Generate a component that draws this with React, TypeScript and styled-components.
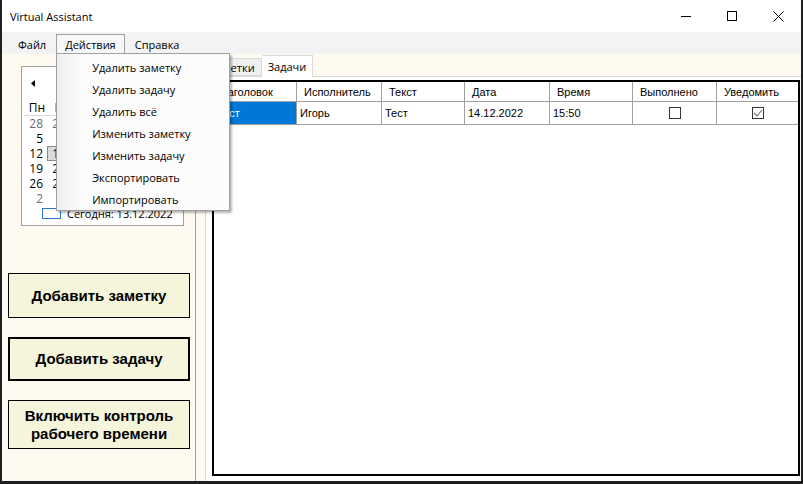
import React from 'react';
import styled, { createGlobalStyle } from 'styled-components';

const ui = `'Open Sans', 'Noto Sans', sans-serif`;
const classic = `'Liberation Sans', Arial, sans-serif`;

const GlobalStyle = createGlobalStyle`
    html, body {
        margin: 0;
        padding: 0;
        background: #1f1f1f;
    }
    * {
        box-sizing: border-box;
    }
`;

const Window = styled.div`
    width: 803px;
    height: 484px;
    display: flex;
    flex-direction: column;
    border-left: 2px solid #1f1f1f;
    border-right: 2px solid #1f1f1f;
    border-bottom: 3px solid #1f1f1f;
    background: #fffaf0;
    overflow: hidden;
`;

const TitleBar = styled.div`
    height: 32px;
    flex: none;
    display: flex;
    align-items: center;
    background: #fff;
`;

const Caption = styled.span`
    flex: 1;
    padding-left: 8px;
    font: 11px ${ui};
    color: #000;
`;

const CaptionButton = styled.div`
    width: 46px;
    height: 32px;
    display: flex;
    align-items: center;
    justify-content: center;
`;

const MenuBar = styled.div`
    height: 22px;
    flex: none;
    display: flex;
    align-items: flex-start;
    gap: 1px;
    padding: 2px 0 0 7px;
    background: #f3f3f3;
    position: relative;
    z-index: 5;
`;

const MenuItem = styled.div<{ $open?: boolean }>`
    position: relative;
    height: 19px;
    padding: 0 8px;
    display: flex;
    align-items: center;
    font: 11px ${ui};
    color: #000;
    border: 1px solid ${(p) => (p.$open ? '#a0a0a0' : 'transparent')};
    border-bottom: none;
    background: ${(p) => (p.$open ? '#f7f7f7' : 'transparent')};
`;

const Dropdown = styled.div`
    position: absolute;
    top: 100%;
    left: -1px;
    width: 174px;
    padding: 2px 0 0;
    border: 1px solid #a0a0a0;
    background: linear-gradient(to right, #efefef 0, #fafafa 23px, #fcfcfc 24px);
    box-shadow: 2px 2px 2px rgba(0, 0, 0, 0.28);
`;

const DropItem = styled.div`
    height: 22px;
    display: flex;
    align-items: center;
    padding-left: 35px;
    font: 11px ${ui};
    color: #000;
    white-space: nowrap;
`;

const Body = styled.div`
    flex: 1;
    display: flex;
    min-height: 0;
`;

const LeftPanel = styled.div`
    width: 194px;
    flex: none;
    display: flex;
    flex-direction: column;
    padding: 12px 0 0 6px;
    border-right: 1px solid #a0a0a0;
    background: #fffaf0;
`;

const Calendar = styled.div`
    width: 163px;
    height: 160px;
    margin-left: 13px;
    padding: 0 0 0 2px;
    border: 1px solid #a0a0a0;
    background: #fff;
    display: flex;
    flex-direction: column;
    font: 12px ${ui};
    color: #000;
`;

const CalHeader = styled.div`
    height: 32px;
    display: flex;
    align-items: center;
    justify-content: space-between;
    padding: 0 8px 0 7px;
`;

const MonthTitle = styled.span`
    font-size: 11px;
`;

const DayGrid = styled.div`
    display: grid;
    grid-template-columns: repeat(7, 23px);
`;

const WeekRow = styled(DayGrid)`
    height: 17px;
    border-bottom: 1px solid #d6d6d6;
    align-items: center;
`;

const WeekDay = styled.span`
    padding-right: 2px;
    text-align: right;
`;

const DayCell = styled.span<{ $other?: boolean; $selected?: boolean }>`
    height: 15px;
    display: flex;
    align-items: center;
    justify-content: flex-end;
    padding-right: 3px;
    line-height: 1;
    color: ${(p) => (p.$other ? '#6d6d6d' : '#000')};
    background: ${(p) => (p.$selected ? '#dadada' : 'transparent')};
    border: 1px solid ${(p) => (p.$selected ? '#8a8a8a' : 'transparent')};
`;

const TodayRow = styled.div`
    height: 15px;
    display: flex;
    align-items: center;
    gap: 6px;
    padding-left: 18px;
    font-size: 11px;
    white-space: nowrap;
`;

const TodayMark = styled.span`
    width: 19px;
    height: 11px;
    flex: none;
    border: 1px solid #2a7ad5;
`;

const ButtonStack = styled.div`
    display: flex;
    flex-direction: column;
    gap: 19px;
    margin-top: 47px;
`;

const ActionButton = styled.button<{ $focused?: boolean; $h: number }>`
    width: 182px;
    height: ${(p) => p.$h}px;
    padding: 0;
    background: #f5f5dc;
    border: ${(p) => (p.$focused ? 2 : 1)}px solid #000;
    font: bold 15px ${classic};
    line-height: 18px;
    color: #000;
    text-align: center;
`;

const RightPanel = styled.div`
    flex: 1;
    min-width: 0;
    display: flex;
    flex-direction: column;
    padding-left: 9px;
    background: #fffaf0;
`;

const TabStrip = styled.div`
    height: 22px;
    flex: none;
    display: flex;
    align-items: flex-end;
    margin-left: -2px;
    position: relative;
    z-index: 1;
`;

const Tab = styled.div<{ $active?: boolean }>`
    height: ${(p) => (p.$active ? 22 : 18)}px;
    margin-bottom: ${(p) => (p.$active ? -1 : 0)}px;
    padding: 0 6px;
    display: flex;
    align-items: center;
    font: 11px ${ui};
    color: #000;
    background: ${(p) => (p.$active ? '#fff' : '#f0f0f0')};
    border: 1px solid #d9d9d9;
    border-bottom: ${(p) => (p.$active ? 'none' : '1px solid #d9d9d9')};
    & + & {
        border-left: none;
    }
`;

const TabPage = styled.div`
    flex: 1;
    display: flex;
    padding: 3px 1px 5px 6px;
    background: #fff;
    border-top: 1px solid #d9d9d9;
    border-left: 1px solid #d9d9d9;
`;

const Grid = styled.div`
    flex: 1;
    border: 2px solid #000;
    background: #fff;
    font: 11px ${classic};
    color: #000;
`;

const GridRow = styled.div<{ $header?: boolean }>`
    display: grid;
    grid-template-columns: 83px 85px 83px 85px 83px 84px 1fr;
    height: ${(p) => (p.$header ? 20 : 23)}px;
    border-bottom: 1px solid #a0a0a0;
`;

const Cell = styled.div<{ $header?: boolean; $selected?: boolean; $center?: boolean }>`
    display: flex;
    align-items: center;
    justify-content: ${(p) => (p.$center ? 'center' : 'flex-start')};
    padding-left: ${(p) => (p.$center ? 0 : p.$header ? 7 : 3)}px;
    border-right: 1px solid #a0a0a0;
    white-space: nowrap;
    overflow: hidden;
    background: ${(p) => (p.$selected ? '#0078d7' : 'transparent')};
    color: ${(p) => (p.$selected ? '#fff' : '#000')};
    &:last-child {
        border-right: none;
    }
`;

const CheckBox = styled.span`
    width: 12px;
    height: 12px;
    border: 1px solid #333;
    background: #fff;
    display: flex;
    align-items: center;
    justify-content: center;
`;

const weekdays = ['Пн', 'Вт', 'Ср', 'Чт', 'Пт', 'Сб', 'Вс'];

const buildDays = () => {
    const start = new Date(2022, 10, 28);
    return Array.from({ length: 42 }, (_, i) => {
        const d = new Date(start);
        d.setDate(start.getDate() + i);
        return { n: d.getDate(), other: d.getMonth() !== 11 };
    });
};

const menuActions = [
    'Удалить заметку',
    'Удалить задачу',
    'Удалить всё',
    'Изменить заметку',
    'Изменить задачу',
    'Экспортировать',
    'Импортировать',
];

const columns = ['Заголовок', 'Исполнитель', 'Текст', 'Дата', 'Время', 'Выполнено', 'Уведомить'];

const Arrow = ({ left }: { left?: boolean }) => (
    <svg width="4" height="7" viewBox="0 0 4 7">
        <path d={left ? 'M4 0 L0 3.5 L4 7 Z' : 'M0 0 L4 3.5 L0 7 Z'} fill="#000" />
    </svg>
);

const App: React.FC = () => {
    const days = buildDays();

    return (
        <>
            <GlobalStyle />
            <Window>
                <TitleBar>
                    <Caption>Virtual Assistant</Caption>
                    <CaptionButton>
                        <svg width="10" height="10" viewBox="0 0 10 10">
                            <path d="M0 5.5 H10" stroke="#000" strokeWidth="1" />
                        </svg>
                    </CaptionButton>
                    <CaptionButton>
                        <svg width="10" height="10" viewBox="0 0 10 10">
                            <rect x="0.5" y="0.5" width="9" height="9" fill="none" stroke="#000" />
                        </svg>
                    </CaptionButton>
                    <CaptionButton>
                        <svg width="11" height="11" viewBox="0 0 11 11">
                            <path d="M0.5 0.5 L10.5 10.5 M10.5 0.5 L0.5 10.5" stroke="#000" strokeWidth="1" />
                        </svg>
                    </CaptionButton>
                </TitleBar>

                <MenuBar>
                    <MenuItem>Файл</MenuItem>
                    <MenuItem $open>
                        Действия
                        <Dropdown>
                            {menuActions.map((a) => (
                                <DropItem key={a}>{a}</DropItem>
                            ))}
                        </Dropdown>
                    </MenuItem>
                    <MenuItem>Справка</MenuItem>
                </MenuBar>

                <Body>
                    <LeftPanel>
                        <Calendar>
                            <CalHeader>
                                <Arrow left />
                                <MonthTitle>Декабрь 2022 г.</MonthTitle>
                                <Arrow />
                            </CalHeader>
                            <WeekRow>
                                {weekdays.map((w) => (
                                    <WeekDay key={w}>{w}</WeekDay>
                                ))}
                            </WeekRow>
                            <DayGrid>
                                {days.map((d, i) => (
                                    <DayCell key={i} $other={d.other} $selected={!d.other && d.n === 13}>
                                        {d.n}
                                    </DayCell>
                                ))}
                            </DayGrid>
                            <TodayRow>
                                <TodayMark />
                                <span>Сегодня: 13.12.2022</span>
                            </TodayRow>
                        </Calendar>

                        <ButtonStack>
                            <ActionButton $h={45}>Добавить заметку</ActionButton>
                            <ActionButton $h={44} $focused>
                                Добавить задачу
                            </ActionButton>
                            <ActionButton $h={49}>
                                Включить контроль
                                <br />
                                рабочего времени
                            </ActionButton>
                        </ButtonStack>
                    </LeftPanel>

                    <RightPanel>
                        <TabStrip>
                            <Tab>Заметки</Tab>
                            <Tab $active>Задачи</Tab>
                        </TabStrip>
                        <TabPage>
                            <Grid>
                                <GridRow $header>
                                    {columns.map((c) => (
                                        <Cell key={c} $header>
                                            {c}
                                        </Cell>
                                    ))}
                                </GridRow>
                                <GridRow>
                                    <Cell $selected>Тест</Cell>
                                    <Cell>Игорь</Cell>
                                    <Cell>Тест</Cell>
                                    <Cell>14.12.2022</Cell>
                                    <Cell>15:50</Cell>
                                    <Cell $center>
                                        <CheckBox />
                                    </Cell>
                                    <Cell $center>
                                        <CheckBox>
                                            <svg width="10" height="8" viewBox="0 0 10 8">
                                                <path d="M1 4 L4 7 L9 1" fill="none" stroke="#6f6f6f" strokeWidth="1.1" />
                                            </svg>
                                        </CheckBox>
                                    </Cell>
                                </GridRow>
                            </Grid>
                        </TabPage>
                    </RightPanel>
                </Body>
            </Window>
        </>
    );
};

export default App;
